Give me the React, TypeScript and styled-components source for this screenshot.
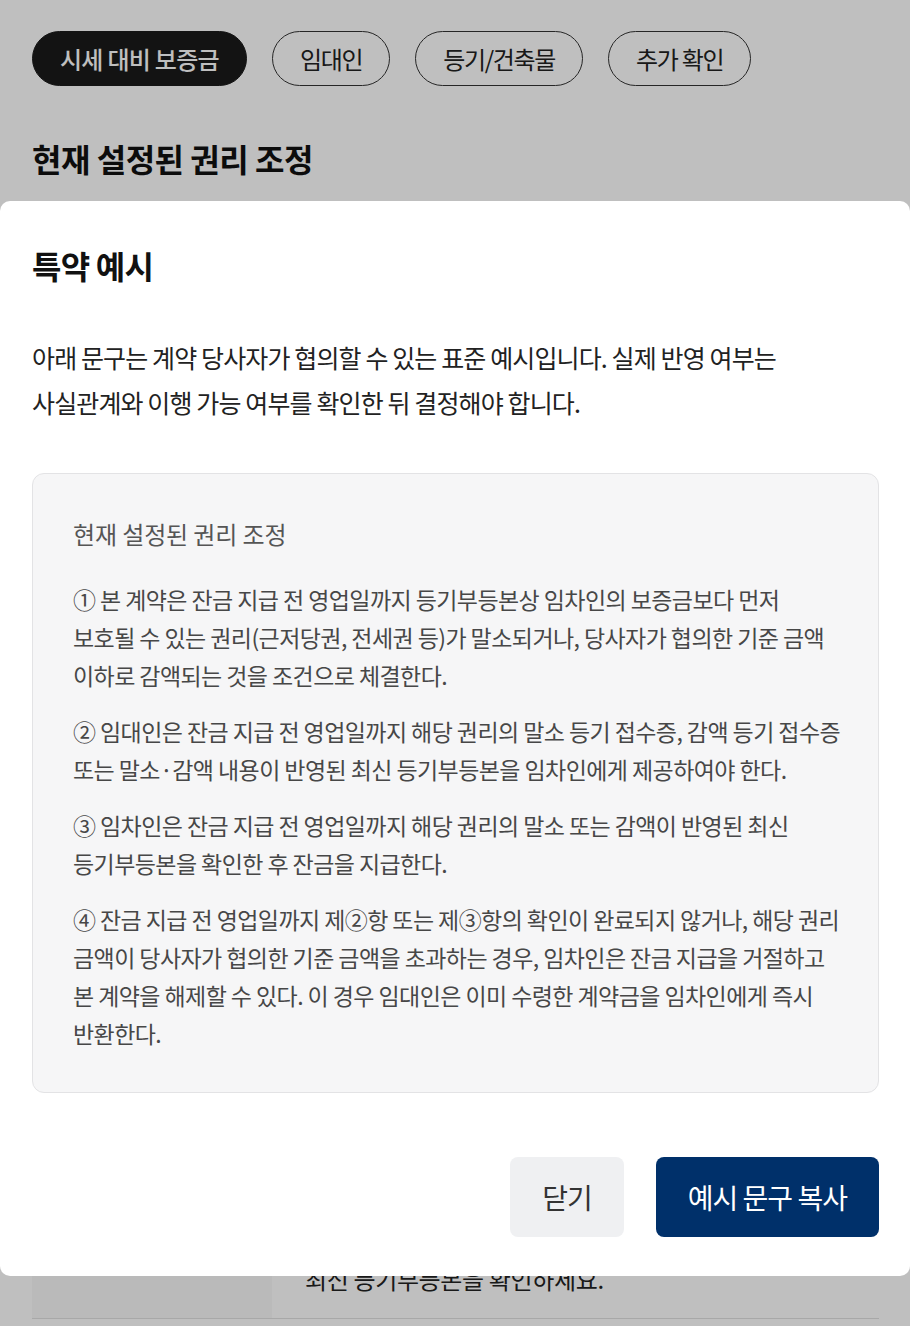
import * as React from "react"
import styled, { createGlobalStyle } from "styled-components"

const FONT = `"Noto Sans CJK KR", "Noto Sans", sans-serif`

const GlobalStyle = createGlobalStyle`
  html, body {
    margin: 0;
    padding: 0;
    background: #ffffff;
    font-family: ${FONT};
    color: #111;
  }
  * {
    box-sizing: border-box;
  }
`

const Page = styled.div`
  padding: 31px 31px 0 32px;
  height: 1326px;
  overflow: hidden;
`

const TabRow = styled.div`
  display: flex;
  gap: 25px;
`

const Tab = styled.button<{ $active?: boolean }>`
  height: 55px;
  padding: 0 27px;
  border-radius: 28px;
  border: 1px solid ${(p) => (p.$active ? "#1a1a1a" : "#333")};
  background: ${(p) => (p.$active ? "#1a1a1a" : "transparent")};
  color: ${(p) => (p.$active ? "#fff" : "#222")};
  font-family: ${FONT};
  font-size: 24px;
  font-weight: ${(p) => (p.$active ? 500 : 400)};
  letter-spacing: ${(p) => (p.$active ? "-0.03em" : "-0.055em")};
  cursor: pointer;
`

const SectionTitle = styled.h2`
  margin: 52px 0 0;
  font-size: 32px;
  line-height: 40px;
  font-weight: 700;
  letter-spacing: -0.015em;
`

const SectionDesc = styled.p`
  margin: 24px 0 0;
  font-size: 22px;
  line-height: 38px;
  color: #444;
  letter-spacing: -0.04em;
`

const SubTitle = styled.h4`
  margin: 40px 0 0;
  font-size: 24px;
  line-height: 38px;
  font-weight: 600;
  letter-spacing: -0.03em;
`

const Table = styled.div`
  margin-top: 25px;
  border-top: 2px solid #222;
`

const Row = styled.div`
  display: grid;
  grid-template-columns: 240px 1fr;
  border-bottom: 1px solid #e0e0e0;
`

const RowHead = styled.div`
  background: #f8f8f8;
  padding: 20px 24px;
  font-size: 23px;
  line-height: 38px;
  font-weight: 600;
  letter-spacing: -0.03em;
`

const RowBody = styled.div`
  padding: 20px 33px;
  font-size: 24px;
  line-height: 38px;
  color: #222;
  letter-spacing: -0.015em;
`

const Dim = styled.div`
  position: fixed;
  inset: 0;
  background: rgba(0, 0, 0, 0.25);
`

const Sheet = styled.div`
  position: fixed;
  left: 0;
  right: 0;
  top: 201px;
  background: #fff;
  border-radius: 10px;
  padding: 42px 31px 39px 32px;
`

const SheetTitle = styled.h3`
  margin: 0;
  font-size: 32px;
  line-height: 44px;
  font-weight: 700;
  letter-spacing: -0.025em;
  color: #111;
`

const SheetDesc = styled.p`
  margin: 48px 0 0;
  font-size: 25px;
  line-height: 45px;
  color: #222;
  letter-spacing: -0.035em;
`

const ClauseBox = styled.div`
  margin-top: 48px;
  background: #f6f6f7;
  border: 1px solid #e3e3e5;
  border-radius: 12px;
  padding: 41px 40px 40px;
`

const ClauseTitle = styled.div`
  font-size: 24px;
  line-height: 38px;
  color: #555;
  letter-spacing: -0.005em;
  margin-bottom: 27px;
`

const Clause = styled.p`
  margin: 0;
  font-size: 23px;
  line-height: 38px;
  color: #474747;
  letter-spacing: -0.025em;
  & + & {
    margin-top: 18px;
  }
`

const Line = styled.span`
  display: block;
  white-space: nowrap;
`

const Actions = styled.div`
  margin-top: 64px;
  display: flex;
  justify-content: flex-end;
  gap: 32px;
`

const ActionButton = styled.button<{ $primary?: boolean }>`
  height: 80px;
  padding: 0 32px;
  border: 0;
  border-radius: 8px;
  background: ${(p) => (p.$primary ? "#00306a" : "#eff0f2")};
  color: ${(p) => (p.$primary ? "#fff" : "#333")};
  font-family: ${FONT};
  font-size: 28px;
  font-weight: 400;
  letter-spacing: -0.035em;
  cursor: pointer;
`

const tabs = ["시세 대비 보증금", "임대인", "등기/건축물", "추가 확인"]

const rows = [
  ["근저당권", ["채권최고액과 말소 또는 감액 조건을", "잔금 전까지 확인하세요."]],
  ["전세권", ["선순위 전세권이 설정되어 있는지", "확인하세요."]],
  ["가압류·가처분", ["권리 제한 사항이 있는 경우", "해소 조건을 특약으로 정하세요."]],
  ["신탁", ["신탁원부와 수탁자 동의 여부를", "확인하세요."]],
  ["임차권등기", ["기존 임차권등기명령 내역을", "확인하세요."]],
  ["경매·공매", ["진행 중인 절차가 있는지", "확인하세요."]],
  ["선순위 보증금", ["다른 임차인의 보증금 규모를", "확인하세요."]],
  ["잔금 전 확인", ["잔금 지급 직전에 다시 한 번", "최신 등기부등본을 확인하세요."]],
] as [string, string[]][]

const clauses = [
  [
    "① 본 계약은 잔금 지급 전 영업일까지 등기부등본상 임차인의 보증금보다 먼저",
    "보호될 수 있는 권리(근저당권, 전세권 등)가 말소되거나, 당사자가 협의한 기준 금액",
    "이하로 감액되는 것을 조건으로 체결한다.",
  ],
  [
    "② 임대인은 잔금 지급 전 영업일까지 해당 권리의 말소 등기 접수증, 감액 등기 접수증",
    "또는 말소·감액 내용이 반영된 최신 등기부등본을 임차인에게 제공하여야 한다.",
  ],
  [
    "③ 임차인은 잔금 지급 전 영업일까지 해당 권리의 말소 또는 감액이 반영된 최신",
    "등기부등본을 확인한 후 잔금을 지급한다.",
  ],
  [
    "④ 잔금 지급 전 영업일까지 제②항 또는 제③항의 확인이 완료되지 않거나, 해당 권리",
    "금액이 당사자가 협의한 기준 금액을 초과하는 경우, 임차인은 잔금 지급을 거절하고",
    "본 계약을 해제할 수 있다. 이 경우 임대인은 이미 수령한 계약금을 임차인에게 즉시",
    "반환한다.",
  ],
]

export default function App() {
  return (
    <>
      <GlobalStyle />
      <Page>
        <TabRow>
          {tabs.map((t, i) => (
            <Tab key={t} $active={i === 0}>
              {t}
            </Tab>
          ))}
        </TabRow>
        <SectionTitle>현재 설정된 권리 조정</SectionTitle>
        <SectionDesc>
          임차인의 보증금보다 먼저 보호될 수 있는 권리가 있다면 잔금 전 말소 또는
          감액 조건을 계약서에 남겨 두세요.
        </SectionDesc>
        <SubTitle>권리 현황</SubTitle>
        <Table>
          {rows.map(([head, lines]) => (
            <Row key={head}>
              <RowHead>{head}</RowHead>
              <RowBody>
                {lines.map((l) => (
                  <Line key={l}>{l}</Line>
                ))}
              </RowBody>
            </Row>
          ))}
        </Table>
      </Page>
      <Dim />
      <Sheet>
        <SheetTitle>특약 예시</SheetTitle>
        <SheetDesc>
          아래 문구는 계약 당사자가 협의할 수 있는 표준 예시입니다. 실제 반영 여부는
          <br />
          사실관계와 이행 가능 여부를 확인한 뒤 결정해야 합니다.
        </SheetDesc>
        <ClauseBox>
          <ClauseTitle>현재 설정된 권리 조정</ClauseTitle>
          {clauses.map((c, i) => (
            <Clause key={i}>
              {c.map((l) => (
                <Line key={l}>{l}</Line>
              ))}
            </Clause>
          ))}
        </ClauseBox>
        <Actions>
          <ActionButton>닫기</ActionButton>
          <ActionButton $primary>예시 문구 복사</ActionButton>
        </Actions>
      </Sheet>
    </>
  )
}
